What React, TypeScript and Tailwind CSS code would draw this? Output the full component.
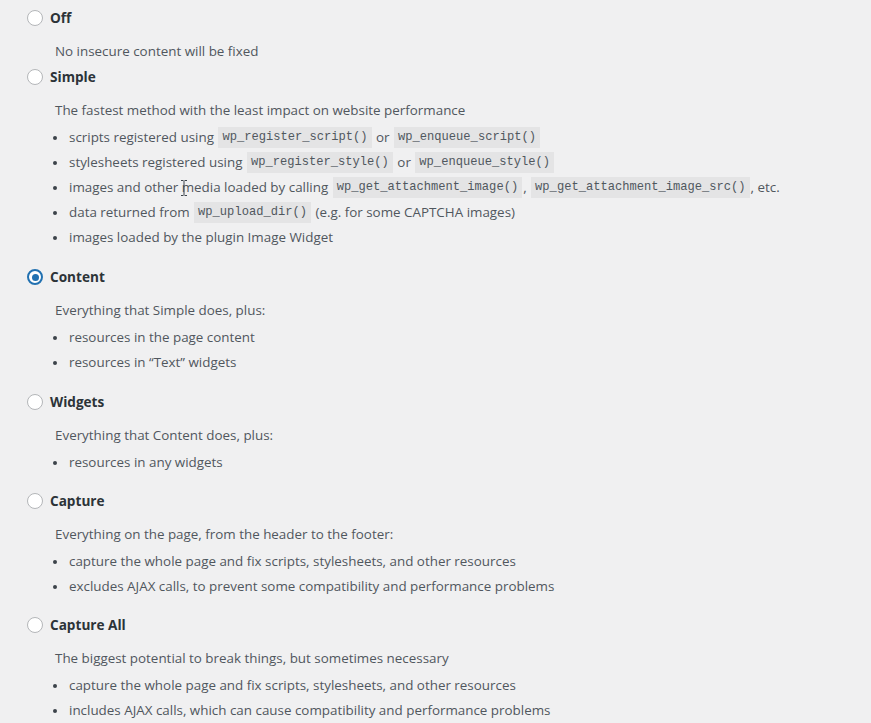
import React from "react";

type Part = string | { code: string };

type Opt = {
  label: string;
  checked?: boolean;
  desc: string;
  items?: Part[][];
  mt: string;
};

const C = (code: string) => ({ code });

const options: Opt[] = [
  { label: "Off", desc: "No insecure content will be fixed", mt: "mt-[8px]" },
  {
    label: "Simple",
    desc: "The fastest method with the least impact on website performance",
    mt: "mt-[6px]",
    items: [
      ["scripts registered using ", C("wp_register_script()"), " or ", C("wp_enqueue_script()")],
      ["stylesheets registered using ", C("wp_register_style()"), " or ", C("wp_enqueue_style()")],
      [
        "images and other media loaded by calling ",
        C("wp_get_attachment_image()"),
        ", ",
        C("wp_get_attachment_image_src()"),
        ", etc.",
      ],
      ["data returned from ", C("wp_upload_dir()"), " (e.g. for some CAPTCHA images)"],
      ["images loaded by the plugin Image Widget"],
    ],
  },
  {
    label: "Content",
    checked: true,
    desc: "Everything that Simple does, plus:",
    mt: "mt-[17px]",
    items: [["resources in the page content"], ["resources in \u201cText\u201d widgets"]],
  },
  {
    label: "Widgets",
    desc: "Everything that Content does, plus:",
    mt: "mt-[17px]",
    items: [["resources in any widgets"]],
  },
  {
    label: "Capture",
    desc: "Everything on the page, from the header to the footer:",
    mt: "mt-[16px]",
    items: [
      ["capture the whole page and fix scripts, stylesheets, and other resources"],
      ["excludes AJAX calls, to prevent some compatibility and performance problems"],
    ],
  },
  {
    label: "Capture All",
    desc: "The biggest potential to break things, but sometimes necessary",
    mt: "mt-[16px]",
    items: [
      ["capture the whole page and fix scripts, stylesheets, and other resources"],
      ["includes AJAX calls, which can cause compatibility and performance problems"],
    ],
  },
];

function Radio({ checked }: { checked?: boolean }) {
  if (checked) {
    return (
      <span className="w-4 h-4 rounded-full border-2 border-[#2271b1] bg-white flex items-center justify-center shrink-0">
        <span className="w-[7px] h-[7px] rounded-full bg-[#2271b1]" />
      </span>
    );
  }
  return <span className="w-4 h-4 rounded-full border border-[#b4b6b9] bg-white shrink-0" />;
}

function Line({ parts }: { parts: Part[] }) {
  return (
    <>
      {parts.map((p, i) =>
        typeof p === "string" ? (
          <span key={i} className="whitespace-pre">{p}</span>
        ) : (
          <code
            key={i}
            className="bg-[#e4e4e5] px-[4px] h-[21px] flex items-center text-[12.1px] text-[#50575e] mx-[1px]"
            style={{ fontFamily: '"Liberation Mono", monospace' }}
          >
            {p.code}
          </code>
        )
      )}
    </>
  );
}

export default function App() {
  return (
    <div
      className="min-h-screen w-full bg-[#f0f0f1] text-[#50575e] text-[13.4px] pl-[27px] pb-4 relative overflow-hidden"
      style={{ fontFamily: '"Open Sans", "Noto Sans", sans-serif' }}
    >
      {options.map((o) => (
        <div key={o.label} className={o.mt}>
          <div className="flex items-center h-5 gap-[7px]">
            <Radio checked={o.checked} />
            <span className="font-bold text-[#2c3338] text-[13.6px]">{o.label}</span>
          </div>
          <div className="mt-[13px] h-5 leading-5 pl-[28px]">{o.desc}</div>
          {o.items && (
            <ul className="mt-[5px] pl-[24px]">
              {o.items.map((it, i) => (
                <li key={i} className="h-[25px] flex items-center">
                  <span className="w-[4px] h-[4px] rounded-full bg-[#3c434a] mr-[12px] ml-[2px] shrink-0" />
                  <Line parts={it} />
                </li>
              ))}
            </ul>
          )}
        </div>
      ))}
      <svg
        className="absolute left-[180px] top-[179px]"
        width="8"
        height="18"
        viewBox="0 0 8 18"
        fill="none"
        stroke="#3c434a"
        strokeWidth="1"
      >
        <path d="M1 1.5h2.5M4.5 1.5H7M4 2v14M1 16.5h2.5M4.5 16.5H7" />
      </svg>
    </div>
  );
}
